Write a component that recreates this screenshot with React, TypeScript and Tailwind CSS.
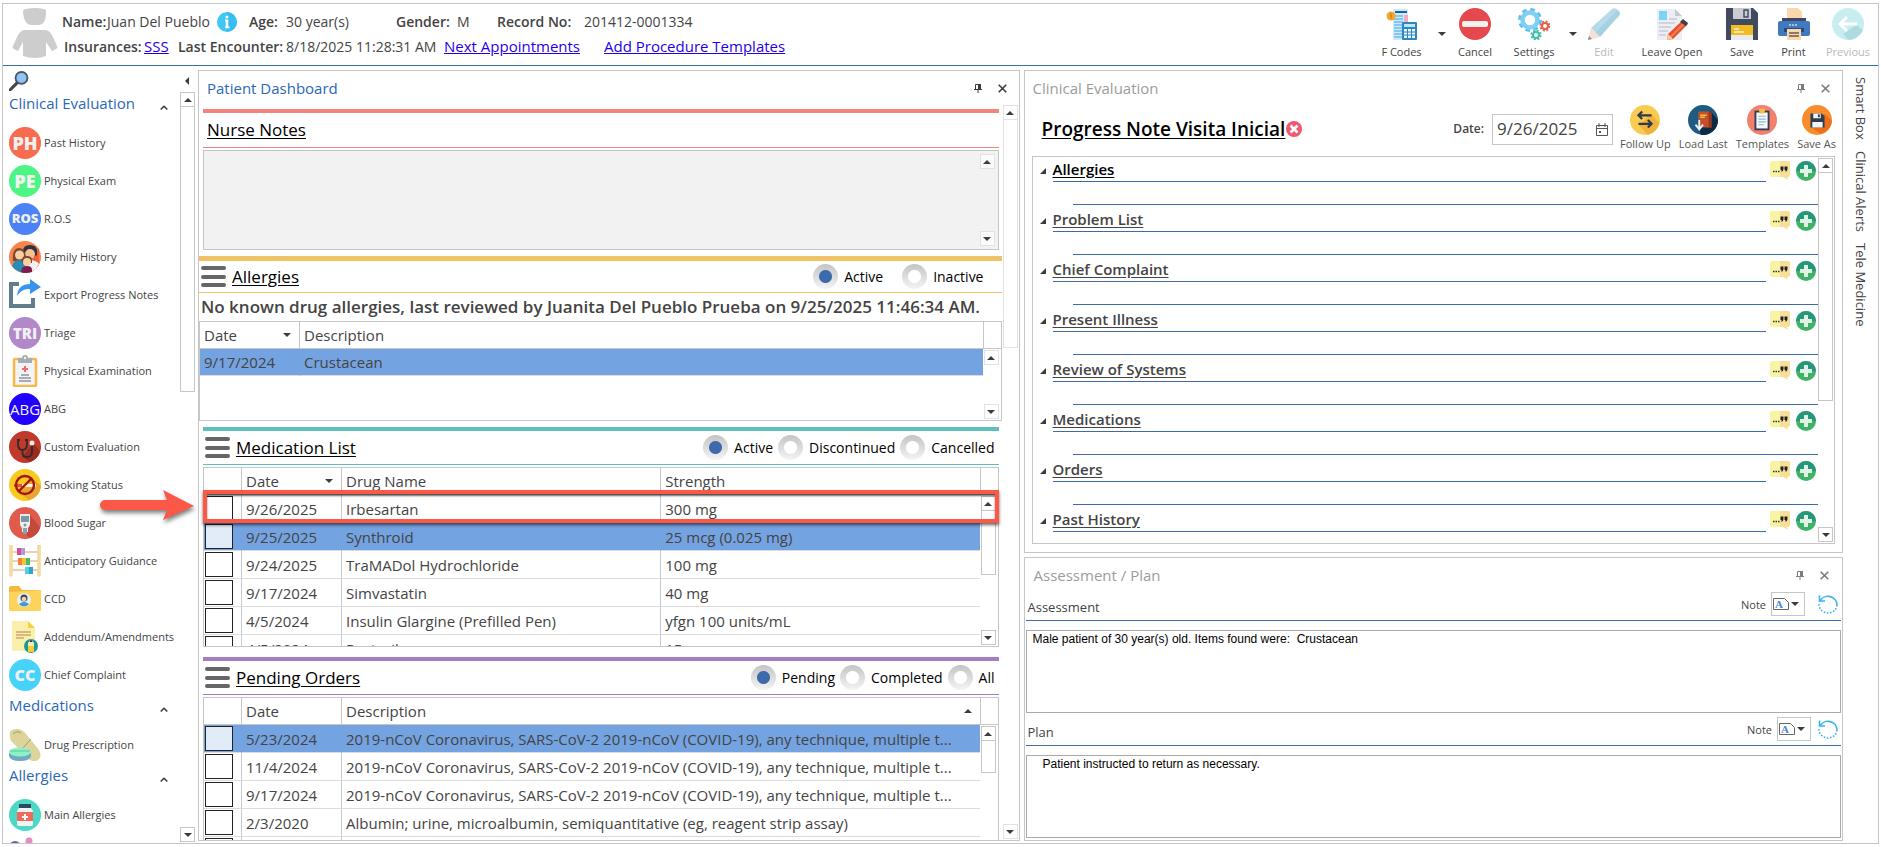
import { useState } from 'react'
import type { ReactNode } from 'react'
import clsx from 'clsx'

/* ---------- small shared pieces ---------- */

const Caret = ({ dir = 'down' }: { dir?: 'up' | 'down' }) => (
  <svg width="8" height="4" viewBox="0 0 8 4" className="shrink-0" aria-hidden="true">
    <path d={dir === 'up' ? 'M0 4 4 0l4 4z' : 'M0 0h8L4 4z'} fill="#3c3c3c" />
  </svg>
)

const Pin = () => (
  <svg width="8" height="9" viewBox="0 0 8 9" aria-hidden="true">
    <path d="M1.5.5h5v5h-5zM0 5.5h8M4 6v3" fill="none" stroke="currentColor" />
    <path d="M4 0h3v6H4z" fill="currentColor" />
  </svg>
)

const Cross = () => (
  <svg width="9" height="9" viewBox="0 0 9 9" aria-hidden="true">
    <path d="m.7.7 7.6 7.6M8.3.7.7 8.3" stroke="currentColor" strokeWidth="1.6" />
  </svg>
)

function ScrollBar({ thumb, light = false }: { thumb?: string; light?: boolean }) {
  const edge = light ? 'border-[#e2e2e2]' : 'border-[#c6c6c6]'
  return (
    <div className="flex flex-col justify-between w-[15px] h-full shrink-0">
      <div>
        <button type="button" aria-label="Scroll up" className={clsx('flex items-center justify-center size-[15px] border bg-white/70', edge)}>
          <Caret dir="up" />
        </button>
        {thumb && <div className={clsx('border border-t-0 bg-white', edge, thumb)} />}
      </div>
      <button type="button" aria-label="Scroll down" className={clsx('flex items-center justify-center size-[15px] border bg-white/70', edge)}>
        <Caret />
      </button>
    </div>
  )
}

function PanelTitle({ title, active = false }: { title: string; active?: boolean }) {
  return (
    <div className={clsx('flex items-center h-[34px] pl-2 pr-3 shrink-0', active ? 'text-[#2a68b8]' : 'text-[#9c9c9c]')}>
      <h1 className="flex-1 text-[15px]">{title}</h1>
      <div className={clsx('flex items-center gap-4', active ? 'text-[#3c3c3c]' : 'text-[#7c7c7c]')}>
        <button type="button" aria-label={`Pin ${title}`}><Pin /></button>
        <button type="button" aria-label={`Close ${title}`}><Cross /></button>
      </div>
    </div>
  )
}

/* ---------- icons ---------- */

const Svg = ({ size = 32, children }: { size?: number; children: ReactNode }) => (
  <svg width={size} height={size} viewBox="0 0 32 32" className="shrink-0" aria-hidden="true">{children}</svg>
)

const PersonIcon = () => (
  <svg width="46" height="50" viewBox="0 0 46 50" fill="#cdcdcd" aria-hidden="true">
    <path d="M11 4q0-3 3-3 9-2 18 0 2 0 2 3 0 13-8 13h-6Q12 17 11 4z" />
    <path d="M13 22h20q4 0 7 5l5 11q1 2-1 3l-4 2-6-9v14q-11 4-23 0V34l-5 9-4-2q-2-1-1-3l5-11q3-5 7-5z" />
  </svg>
)

const InfoIcon = () => (
  <Svg size={20}>
    <circle cx="16" cy="16" r="16" fill="#3fc8f4" />
    <path d="M16 0a16 16 0 0 1 0 32z" fill="#2fb4ea" opacity=".5" />
    <circle cx="16" cy="8" r="2.4" fill="#fff" />
    <path d="M13 12h5v11h2v3h-7v-3h1v-8h-1z" fill="#fff" />
  </Svg>
)

const FCodesIcon = () => (
  <Svg>
    <path d="M7 1h15v31H7z" fill="#cfeaf9" />
    <path d="M9 4h12" stroke="#1f5e96" strokeWidth="2" />
    <path d="M8 8h9M8 11h9M8 14h9M8 17h9M8 20h9M8 23h9M8 26h9M8 29h9" stroke="#6cbcf4" strokeWidth="1.6" />
    <path d="M18 7h4v11h-4z" fill="#f4a9c2" />
    <circle cx="5" cy="8" r="4.5" fill="#f7a72b" />
    <path d="M5 5.500v5" stroke="#c9822a" strokeWidth="1.600" />
    <rect x="16" y="14" width="15" height="18" rx="1" fill="#2f85bd" />
    <path d="M18 16h11v3H18z" fill="#bfe6f6" />
    <path d="M18 21h11v9H18z" fill="#e9f7fd" />
    <path d="M21.500 21v9M25.500 21v9M18 24h11M18 27h11" stroke="#2f85bd" />
  </Svg>
)

const CancelIcon = () => (
  <Svg>
    <circle cx="16" cy="16" r="16" fill="#e5484d" />
    <rect x="3" y="13" width="26" height="6" rx="2" fill="#f5f0f0" />
  </Svg>
)

const SettingsIcon = () => (
  <Svg>
    <g fill="none">
      <circle cx="12" cy="12" r="10.500" stroke="#5cc0f0" strokeWidth="3" strokeDasharray="4.500 3.740" />
      <circle cx="12" cy="12" r="7.500" stroke="#7ed0f7" strokeWidth="4.500" />
      <circle cx="27" cy="18" r="4.500" stroke="#e8604c" strokeWidth="2" strokeDasharray="2 1.530" />
      <circle cx="27" cy="18" r="3" stroke="#e8604c" strokeWidth="2" />
      <circle cx="18" cy="27" r="4.500" stroke="#3fc1a8" strokeWidth="2" strokeDasharray="2 1.530" />
      <circle cx="18" cy="27" r="3" stroke="#3fc1a8" strokeWidth="2" />
    </g>
  </Svg>
)

const EditIcon = () => (
  <Svg>
    <path d="M24 1q3-2 6 1t1 6L12 29 3 20z" fill="#b5dbe9" />
    <path d="m28 10 3-2q2-3-1-6L7 25l5 4z" fill="#9fcadd" opacity=".6" />
    <path d="m3 20 9 9-12 3z" fill="#f8dfd3" />
    <path d="m1 28 3 3-4 1z" fill="#8b8b98" />
  </Svg>
)

const LeaveOpenIcon = () => (
  <Svg>
    <path d="M1 1h18l7 7v24H1z" fill="#eceef3" />
    <path d="M19 1v7h7z" fill="#c6cad6" />
    <path d="M3 3h8v9H3z" fill="#7ed2f7" />
    <path d="M13 11h8M3 15h16M3 19h12M3 23h9M3 27h7" stroke="#c6cad6" strokeWidth="1.600" />
    <path d="m27 12 5 4-15 15-6 1 1-6z" fill="#e8502f" />
    <path d="m29.500 14-15 15" stroke="#f47d50" strokeWidth="2" />
    <path d="m27 11 5 4-2 3-6-4z" fill="#38404e" />
    <path d="m12 26 5 5-6 1z" fill="#f6cf9a" />
  </Svg>
)

const SaveIcon = () => (
  <Svg>
    <path d="M0 0h27l5 5v27H0z" fill="#414a5e" />
    <path d="M7 0h18v11H7z" fill="#c9ccd2" />
    <path d="M18 2h4v7h-4z" fill="none" stroke="#414a5e" strokeWidth="1.400" />
    <path d="M5 17h22v10H5z" fill="#f1bb22" />
    <path d="M8 21h5M8 24h10" stroke="#fdf3cf" strokeWidth="1.400" />
    <path d="M5 27h22v5H5z" fill="#e9ebee" />
  </Svg>
)

const PrintIcon = () => (
  <Svg>
    <path d="M9 0h11l4 4v9H9z" fill="#fbd7ad" />
    <path d="M4 10h24v5H4z" fill="#3c4a63" />
    <path d="M2 13h28q2 0 2 2v11q0 2-2 2H2q-2 0-2-2V15q0-2 2-2z" fill="#4079be" />
    <path d="M11 17h9" stroke="#bcd7f5" strokeWidth="1.400" strokeDasharray="2 1" />
    <path d="M6 20h20v4H6z" fill="#2c4a78" />
    <path d="M9 21h14v11H9z" fill="#fbd7ad" />
    <path d="M11 25h10M11 28h10" stroke="#6b5a4c" strokeWidth="1.300" />
  </Svg>
)

const PreviousIcon = () => (
  <Svg>
    <circle cx="16" cy="16" r="16" fill="#c8edf1" />
    <path d="m24 17 7 5a16 16 0 0 1-15 10l-5-6z" fill="#aedbe1" />
    <path d="M25 16H8M15 9l-7 7 7 7" fill="none" stroke="#fff" strokeWidth="3" />
  </Svg>
)

const SearchIcon = () => (
  <Svg size={20}>
    <path d="m2 30 11-11" stroke="#444" strokeWidth="5" strokeLinecap="round" />
    <circle cx="20" cy="11" r="9.500" fill="#8fc4f8" stroke="#4d5561" strokeWidth="3" />
  </Svg>
)

const FamilyIcon = () => (
  <Svg>
    <circle cx="16" cy="16" r="16" fill="#f9854a" />
    <path d="M16 32a16 16 0 0 0 14-9V8L18 4z" fill="#f0603e" />
    <path d="M14 10q0-6 7-6t7 6v4q-7 5-14 0z" fill="#2f3440" />
    <circle cx="21" cy="13" r="5" fill="#f4c191" />
    <path d="M4 20q-1-13 6-13t7 13z" fill="#7a4a2c" />
    <circle cx="10.500" cy="14" r="4.500" fill="#f7cfa2" />
    <path d="M3 25q2-6 7-6t6 6v7Q7 31 3 25z" fill="#2a8bb5" />
    <path d="M17 22q4-4 9-2 3 1 4 3-4 8-12 9z" fill="#f2f2f2" />
    <path d="M13 19q0-4 5-4t5 4v3H13z" fill="#7a4a2c" />
    <circle cx="18" cy="21" r="4" fill="#f7cfa2" />
    <path d="M12 31q0-6 6-6t5 6q-6 2-11 0z" fill="#7d1d4e" />
  </Svg>
)

const ExportIcon = () => (
  <Svg>
    <path d="M10 5H2v22h22v-8" fill="none" stroke="#607d8b" strokeWidth="4" />
    <path d="M8 17Q9 5 21 5V0l11 8-11 7v-5q-8-1-13 7z" fill="#3a94ee" />
  </Svg>
)

const ClipboardIcon = () => (
  <Svg>
    <rect x="5" y="4" width="22" height="27" rx="1" fill="#f1f3f4" stroke="#fbb649" strokeWidth="2.500" />
    <path d="M9 3h4a3 3 0 0 1 6 0h4v5H9z" fill="#a8adb2" />
    <circle cx="16" cy="3" r="1.200" fill="#f1f3f4" />
    <path d="M16 11v6M13 14h6" stroke="#f46a6a" strokeWidth="2" />
    <path d="M12 20h8M10 23h12M10 26h12" stroke="#5c666e" strokeWidth="1.200" />
  </Svg>
)

const StethoscopeIcon = () => (
  <Svg>
    <circle cx="16" cy="16" r="16" fill="#c0392b" />
    <path d="m13 26 11-14 7 8a16 16 0 0 1-10 11z" fill="#9a2a20" />
    <path d="M11 9H9v4q0 6 4.500 6T18 13V9h-2M13.500 19v3q0 4 4.500 4t5-4v-8" fill="none" stroke="#2c2c2c" strokeWidth="1.800" />
    <circle cx="23" cy="12" r="2.500" fill="#e8e8e8" />
  </Svg>
)

const SmokingIcon = () => (
  <Svg>
    <circle cx="16" cy="16" r="16" fill="#f9c91d" />
    <path d="m22 8 10 9a16 16 0 0 1-12 14l-11-8z" fill="#eaa62c" />
    <path d="M5 15h8v3H5z" fill="#e25241" />
    <path d="M13 15h14v3H13z" fill="#f4f1ea" />
    <circle cx="16" cy="16" r="9" fill="none" stroke="#a3160d" strokeWidth="2.400" />
    <path d="m10 22 12-12" stroke="#a3160d" strokeWidth="2.400" />
  </Svg>
)

const BloodSugarIcon = () => (
  <Svg>
    <circle cx="16" cy="16" r="16" fill="#e15b4c" />
    <path d="m21 8 10 12a16 16 0 0 1-10 11l-7-6z" fill="#c24a3d" />
    <path d="M11 7h10v10q0 2-2 4v4h-6v-4q-2-2-2-4z" fill="#eceff1" />
    <path d="M12 9h8v6h-8z" fill="#7f97a5" />
    <circle cx="16" cy="18" r="1.500" fill="#7f97a5" />
    <path d="M14 21h4v6h-4z" fill="#8aa0ad" />
  </Svg>
)

const AbacusIcon = () => (
  <Svg>
    <path d="M2 7h28M2 16h28M2 25h28" stroke="#e3c48e" strokeWidth="1.500" />
    <path d="M2 1v29M30 1v29" stroke="#f5d9a0" strokeWidth="3.600" strokeLinecap="round" />
    <path d="M8 3h4v7H8z" fill="#cf4f9a" />
    <path d="M12 3h4v7h-4z" fill="#b39ad6" />
    <path d="M9 13h4v7H9z" fill="#f5803e" />
    <path d="M13 13h4v7h-4z" fill="#f7c52d" />
    <path d="M17 13h4v7h-4z" fill="#46b978" />
    <path d="M16 22h4v7h-4z" fill="#52cdea" />
    <path d="M20 22h4v7h-4z" fill="#2aa6d0" />
  </Svg>
)

const FolderIcon = () => (
  <Svg>
    <path d="M0 5q0-2 2-2h8l3 4h17q2 0 2 2v17q0 2-2 2H2q-2 0-2-2z" fill="#f3b93c" />
    <path d="M0 9 32 7v19q0 2-2 2H2q-2 0-2-2z" fill="#fdd35b" />
    <circle cx="15" cy="17" r="7" fill="#e6eff5" />
    <circle cx="15" cy="15" r="3.500" fill="#3b4a5a" />
    <circle cx="15" cy="16" r="2.300" fill="#f7cfa2" />
    <path d="M10 21q5-4 10 0-5 5-10 0z" fill="#3f97d4" />
  </Svg>
)

const AddendumIcon = () => (
  <Svg>
    <path d="M3 0h16l7 7v23H3z" fill="#fcefae" />
    <path d="M19 0v7h7z" fill="#f5d33a" />
    <path d="M7 11h15M7 14h15M7 17h8" stroke="#c9a86b" strokeWidth="1.300" />
    <circle cx="22" cy="25" r="7" fill="#199b8d" />
    <path d="m22 18 3 4v9h-6v-9z" fill="#f6e9c0" />
    <path d="m22 18 1.500 3h-3z" fill="#333" />
    <path d="M19 25h6v6h-6z" fill="#f5cd3a" />
  </Svg>
)

const PillsIcon = () => (
  <Svg>
    <path d="M1 8Q-1 0 8 0q5 0 9 5l13 16q4 8-3 11-6 1-9-4L3 13Q1 11 1 8z" fill="#ddd49c" />
    <path d="m14 19 8-9M4 5q4-4 8-1" stroke="#a49b66" fill="none" />
    <path d="M0 24h22v3q-1 5-11 5T0 27z" fill="#6fa9c6" />
    <ellipse cx="11" cy="23" rx="11" ry="4.500" fill="#8ef0c4" />
    <path d="M1 22h20" stroke="#5cc99b" />
  </Svg>
)

const BottleIcon = () => (
  <Svg>
    <circle cx="16" cy="16" r="16" fill="#4bd9c5" />
    <path d="M10 5h12v4H10z" fill="#2c4a5e" />
    <path d="M10 9h12l2 3v13q0 2-2 2H10q-2 0-2-2V12z" fill="#eef4f4" />
    <path d="M8 13h16v9H8z" fill="#f0695a" />
    <path d="M16 15v6M13 18h6" stroke="#fff" strokeWidth="2" />
  </Svg>
)

const MorePillsIcon = () => (
  <Svg>
    <circle cx="6" cy="10" r="6" fill="#6a5fb4" />
    <circle cx="20" cy="4" r="3.500" fill="#e58cc0" />
    <path d="M15 12q5-5 10 0v8H15z" fill="#7b7fd0" />
  </Svg>
)

const FollowUpIcon = () => (
  <Svg size={30}>
    <circle cx="16" cy="16" r="16" fill="#f9cb51" />
    <path d="m22 9 9 10a16 16 0 0 1-12 13l-9-10z" fill="#eeb33d" />
    <path d="M23 11H9M13 7l-4 4 4 4M9 20h14M19 16l4 4-4 4" fill="none" stroke="#2f3a4a" strokeWidth="2.400" />
  </Svg>
)

const LoadLastIcon = () => (
  <Svg size={30}>
    <circle cx="16" cy="16" r="16" fill="#1d5b80" />
    <path d="m25 8 7 8a16 16 0 0 1-18 16l-3-8z" fill="#0c2c45" />
    <path d="M11 7h11l3 2v15H11z" fill="#c2502c" />
    <path d="M22 7h3v17h-3z" fill="#97381d" />
    <path d="M13 11h7M13 13h5" stroke="#f5b942" strokeWidth="1.600" />
    <path d="M12 16v9M8 21l4 5 4-5" fill="none" stroke="#e8f4fb" strokeWidth="2" />
  </Svg>
)

const TemplatesIcon = () => (
  <Svg size={30}>
    <circle cx="16" cy="16" r="16" fill="#f37f6d" />
    <path d="M8 6h16v21H8z" fill="#324055" />
    <path d="M10 8h12v17H10z" fill="#f4f8fa" />
    <path d="M13 4h6v5h-6z" fill="#f5bd41" />
    <path d="M12 12h8M12 15h8M12 18h8M12 21h6" stroke="#8fb9d6" strokeWidth="1.200" />
  </Svg>
)

const SaveAsIcon = () => (
  <Svg size={30}>
    <circle cx="16" cy="16" r="16" fill="#f78d2c" />
    <path d="m24 9 8 8a16 16 0 0 1-12 14l-11-8z" fill="#ec6f1c" />
    <path d="M9 9h12l3 3v12H9z" fill="#2f3d50" />
    <path d="M12 9h8v5h-8zM11 18h11v6H11z" fill="#f2f4f5" />
    <path d="M17 10h2v3h-2z" fill="#2f3d50" />
  </Svg>
)

const QuoteIcon = () => (
  <svg width="20" height="19" viewBox="0 0 20 19" aria-hidden="true">
    <path d="M0 2q0-2 2-2h8v16H2q-2 0-2-2z" fill="#f8f4a4" />
    <path d="M10 0h8q2 0 2 2v12q0 2-2 2h-1l1 3-5-3h-3z" fill="#f8df99" />
    <path d="M3 10.500h1.500M5.500 10.500H7M8 10.500h1.500" stroke="#333" strokeWidth="1.400" />
    <path d="M10.500 5.500h3V8q0 2-2 3v-2h-1zM14.500 5.500h3V8q0 2-2 3v-2h-1z" fill="#222" />
  </svg>
)

const PlusIcon = () => (
  <svg width="20" height="20" viewBox="0 0 20 20" aria-hidden="true">
    <circle cx="10" cy="10" r="10" fill="#3fb265" />
    <path d="M0 10a10 10 0 0 1 20 0z" fill="#27977c" />
    <path d="M8 4h4v4h4v4h-4v4H8v-4H4V8h4z" fill="#dff3e4" />
  </svg>
)

const RefreshIcon = () => (
  <svg width="20" height="20" viewBox="0 0 20 20" fill="none" aria-hidden="true">
    <path d="M2 7a9 8.500 0 0 1 17 4" stroke="#35b4f0" strokeWidth="1.600" />
    <path d="M1.500 1.500v5.500H7" stroke="#35b4f0" strokeWidth="1.600" />
    <path d="M19 11a9 8.500 0 0 1-18-1" stroke="#35b4f0" strokeWidth="1.600" strokeDasharray="1.600 1.600" />
  </svg>
)

const Badge = ({ text, className }: { text: string; className: string }) => (
  <span className={clsx('flex items-center justify-center size-8 rounded-full shrink-0 overflow-hidden text-[#f0f0f0]', className)}>
    {text}
  </span>
)

/* ---------- header ---------- */

const tools = [
  { label: 'F Codes', icon: <FCodesIcon />, width: 'w-[65px]', menu: 'w-[15px]' },
  { label: 'Cancel', icon: <CancelIcon />, width: 'w-[52px]' },
  { label: 'Settings', icon: <SettingsIcon />, width: 'w-[66px]', menu: 'w-[12px]' },
  { label: 'Edit', icon: <EditIcon />, width: 'w-[50px]', disabled: true },
  { label: 'Leave Open', icon: <LeaveOpenIcon />, width: 'w-[86px]' },
  { label: 'Save', icon: <SaveIcon />, width: 'w-[54px]' },
  { label: 'Print', icon: <PrintIcon />, width: 'w-[49px]' },
  { label: 'Previous', icon: <PreviousIcon />, width: 'w-[60px]', disabled: true },
]

function Header() {
  return (
    <header className="flex shrink-0 h-[62px] border-b border-[#3a6ea8]">
      <div className="pl-[9px] pt-1 w-[59px] shrink-0"><PersonIcon /></div>
      <div className="flex-1 pt-[5px] text-sm whitespace-nowrap">
        <div className="flex items-center h-[25px]">
          <b className="font-semibold w-[45px]">Name:</b>
          <span className="w-[110px]">Juan Del Pueblo</span>
          <button type="button" aria-label="Patient information" className="w-8"><InfoIcon /></button>
          <b className="font-semibold w-[37px]">Age:</b>
          <span className="w-[110px]">30 year(s)</span>
          <b className="font-semibold w-[61px]">Gender:</b>
          <span className="w-[40px]">M</span>
          <b className="font-semibold w-[87px]">Record No:</b>
          <span>201412-0001334</span>
        </div>
        <div className="flex items-center h-[25px] pl-[2px]">
          <b className="font-semibold w-[80px]">Insurances:</b>
          <a href="#insurance" className="text-[15px] text-[#1f00f0] underline w-[34px]">SSS</a>
          <b className="font-semibold w-[108px]">Last Encounter:</b>
          <span className="w-[158px]">8/18/2025 11:28:31 AM</span>
          <a href="#appointments" className="text-[15px] text-[#1f00f0] underline w-[160px]">Next Appointments</a>
          <a href="#procedures" className="text-[15px] text-[#1f00f0] underline">Add Procedure Templates</a>
        </div>
      </div>
      <nav className="flex pt-1 text-[11px]">
        {tools.map((tool) => (
          <div key={tool.label} className="flex">
            <button type="button" disabled={tool.disabled} className={clsx('flex flex-col items-center disabled:text-[#b9b9b9]', tool.width)}>
              {tool.icon}
              <span className="leading-6 whitespace-nowrap">{tool.label}</span>
            </button>
            {tool.menu && (
              <button type="button" aria-label={`${tool.label} menu`} className={clsx('flex justify-center pt-6', tool.menu)}><Caret /></button>
            )}
          </div>
        ))}
      </nav>
    </header>
  )
}

/* ---------- sidebar ---------- */

const menu = [
  {
    title: 'Clinical Evaluation',
    items: [
      { label: 'Past History', icon: <Badge text="PH" className="bg-[#f76b4f] text-lg font-black" /> },
      { label: 'Physical Exam', icon: <Badge text="PE" className="bg-[#4cf584] text-lg font-black" /> },
      { label: 'R.O.S', icon: <Badge text="ROS" className="bg-[#4b82f5] text-[13px] font-black" /> },
      { label: 'Family History', icon: <FamilyIcon /> },
      { label: 'Export Progress Notes', icon: <ExportIcon /> },
      { label: 'Triage', icon: <Badge text="TRI" className="bg-[#b388c9] text-[15px] font-black" /> },
      { label: 'Physical Examination', icon: <ClipboardIcon /> },
      { label: 'ABG', icon: <Badge text="ABG" className="bg-[#2200ff] text-[15px]" /> },
      { label: 'Custom Evaluation', icon: <StethoscopeIcon /> },
      { label: 'Smoking Status', icon: <SmokingIcon /> },
      { label: 'Blood Sugar', icon: <BloodSugarIcon /> },
      { label: 'Anticipatory Guidance', icon: <AbacusIcon /> },
      { label: 'CCD', icon: <FolderIcon /> },
      { label: 'Addendum/Amendments', icon: <AddendumIcon /> },
      { label: 'Chief Complaint', icon: <Badge text="CC" className="bg-[#46d3fa] text-base font-black" /> },
    ],
  },
  { title: 'Medications', items: [{ label: 'Drug Prescription', icon: <PillsIcon /> }] },
  { title: 'Allergies', items: [{ label: 'Main Allergies', icon: <BottleIcon /> }, { label: '', icon: <MorePillsIcon /> }] },
]

function Sidebar() {
  return (
    <aside className="flex flex-col w-[195px] shrink-0 min-h-0">
      <div className="flex justify-between h-[25px] pt-1 pl-[6px] pr-[9px] shrink-0">
        <button type="button" aria-label="Search"><SearchIcon /></button>
        <button type="button" aria-label="Collapse menu">
          <svg width="4" height="8" viewBox="0 0 4 8"><path d="M4 0v8L0 4z" fill="#3c3c3c" /></svg>
        </button>
      </div>
      <div className="flex flex-1 min-h-0">
        <nav className="flex-1 min-w-0 overflow-hidden pl-[6px]">
          {menu.map((group, i) => (
            <section key={group.title}>
              <h2 className={clsx('flex items-center justify-between pr-3 text-[15px] text-[#2a68b8]', i === 0 ? 'h-[33px] pb-2' : 'h-8 pb-[10px]')}>
                {group.title}
                <button type="button" aria-label={`Toggle ${group.title}`} className="pt-2">
                  <svg width="8" height="5" viewBox="0 0 8 5"><path d="m.7 4.500 3.300-3.300 3.300 3.300" fill="none" stroke="#3c3c3c" strokeWidth="1.500" /></svg>
                </button>
              </h2>
              {group.items.map((item) => (
                <button key={item.label} type="button" aria-label={item.label || 'More allergies'} className="flex items-center gap-[3px] h-[38px] text-[11px] whitespace-nowrap">
                  {item.icon}
                  {item.label}
                </button>
              ))}
            </section>
          ))}
        </nav>
        <div className="pt-px pb-px pr-[3px]"><ScrollBar thumb="h-[285px]" /></div>
      </div>
    </aside>
  )
}

/* ---------- patient dashboard ---------- */

function RadioSet({ name, options, spacing }: { name: string; options: string[]; spacing: string }) {
  const [value, setValue] = useState(options[0])
  return (
    <div className={clsx('flex items-center text-sm text-black', spacing)}>
      {options.map((option) => (
        <label key={option} className="flex items-center gap-[6px]">
          <input
            type="radio"
            name={name}
            checked={value === option}
            onChange={() => setValue(option)}
            className="appearance-none size-[25px] rounded-full bg-[radial-gradient(circle,white_6px,transparent_7px),linear-gradient(#c4c4c4,#f4f4f4)] checked:bg-[radial-gradient(circle,#3d6aab_6px,transparent_7px),linear-gradient(#c4c4c4,#f4f4f4)]"
          />
          <span className="pt-px">{option}</span>
        </label>
      ))}
    </div>
  )
}

function SectionHead({ title, children }: { title: string; children: ReactNode }) {
  return (
    <>
      <button type="button" aria-label={`${title} menu`} className="flex flex-col justify-between w-[25px] h-[21px]">
        <span className="w-full h-1 rounded-sm bg-[#666]" />
        <span className="w-full h-1 rounded-sm bg-[#666]" />
        <span className="w-full h-1 rounded-sm bg-[#666]" />
      </button>
      <h2 className="flex-1 pt-px text-[17px] text-black underline underline-offset-2">{title}</h2>
      {children}
    </>
  )
}

type Column = { label: string; width?: string; sort?: 'up' | 'down' }

type GridProps = {
  columns: Column[]
  rows: string[][]
  selected: number
  checks?: boolean
  thumb?: string
  className: string
}

function DataGrid({ columns, rows, selected, checks = false, thumb, className }: GridProps) {
  return (
    <div className={clsx('flex overflow-hidden border border-[#c6c6c6]', className)}>
      <div className="flex-1 min-w-0 overflow-hidden">
        <table className="w-full table-fixed border-separate border-spacing-0 text-[15px] leading-6">
          <thead>
            <tr className="h-[27px] text-left">
              {checks && <th aria-label="Select" className="w-[37px] p-0 border-b border-[#c6c6c6]" />}
              {columns.map((col, i) => (
                <th key={col.label} className={clsx('p-0 pl-1 font-normal border-b border-[#c6c6c6]', (checks || i > 0) && 'border-l', col.width)}>
                  <div className="flex items-center justify-between pr-2">
                    {col.label}
                    {col.sort && <Caret dir={col.sort} />}
                  </div>
                </th>
              ))}
            </tr>
          </thead>
          <tbody>
            {rows.map((row, r) => (
              <tr key={row.join()} className={clsx(checks ? 'h-7' : 'h-[27px]', r === selected && 'bg-[#74a3e1]')}>
                {checks && (
                  <td className="p-0 pl-px border-b border-[#dcdcdc]">
                    <input
                      type="checkbox"
                      aria-label={`${row[0]} ${row[1]}`}
                      className={clsx('block appearance-none w-7 h-[25px] border border-[#222] checked:bg-[#444]', r === selected ? 'bg-[#e2ecf9]' : 'bg-white')}
                    />
                  </td>
                )}
                {row.map((cell, c) => (
                  <td
                    key={c}
                    className={clsx(
                      'p-0 pl-1 truncate border-b border-b-[#dcdcdc]',
                      (checks || c > 0) && 'border-l',
                      r === selected ? 'border-l-[#74a3e1]' : 'border-l-[#c3cad3]',
                    )}
                  >
                    {cell}
                  </td>
                ))}
              </tr>
            ))}
          </tbody>
        </table>
      </div>
      <div className="flex flex-col w-[18px] shrink-0">
        <div className="h-[27px] shrink-0 border-l border-b border-[#c6c6c6]" />
        <div className="flex-1 min-h-0 pl-px pt-px pb-px"><ScrollBar thumb={thumb} light={!thumb} /></div>
      </div>
    </div>
  )
}

const medications = [
  ['9/26/2025', 'Irbesartan', '300 mg'],
  ['9/25/2025', 'Synthroid', '25 mcg (0.025 mg)'],
  ['9/24/2025', 'TraMADol Hydrochloride', '100 mg'],
  ['9/17/2024', 'Simvastatin', '40 mg'],
  ['4/5/2024', 'Insulin Glargine (Prefilled Pen)', 'yfgn 100 units/mL'],
  ['4/5/2024', 'Restoril', '15 mg'],
]

const covidTest = '2019-nCoV Coronavirus, SARS-CoV-2 2019-nCoV (COVID-19), any technique, multiple t...'

const orders = [
  ['5/23/2024', covidTest],
  ['11/4/2024', covidTest],
  ['9/17/2024', covidTest],
  ['2/3/2020', 'Albumin; urine, microalbumin, semiquantitative (eg, reagent strip assay)'],
  ['', ''],
]

function Dashboard() {
  return (
    <section className="flex flex-col flex-1 min-w-0 border border-[#c6c6c6]">
      <PanelTitle title="Patient Dashboard" active />
      <div className="flex flex-1 min-h-0">
        <div className="flex flex-col flex-1 min-w-0 overflow-hidden pt-1">
          <div className="shrink-0 ml-1 mr-[3px]">
            <div className="flex items-center h-[39px] pl-1 border-t-4 border-b border-[#f4827e]">
              <h2 className="text-[17px] text-black underline underline-offset-2">Nurse Notes</h2>
            </div>
            <div className="flex mt-[2px] h-[100px] border border-[#c6c6c6] bg-[#f2f2f2]">
              <textarea aria-label="Nurse Notes" className="flex-1 resize-none outline-none" />
              <div className="py-[3px] pr-[3px]"><ScrollBar light /></div>
            </div>
          </div>

          <div className="shrink-0 mt-[6px]">
            <div className="flex items-center gap-[6px] h-[37px] pl-[2px] pr-[18px] border-t-[5px] border-b border-[#f0c466]">
              <SectionHead title="Allergies">
                <RadioSet name="allergies" options={['Active', 'Inactive']} spacing="gap-[19px]" />
              </SectionHead>
            </div>
            <p className="h-7 pl-[2px] text-[17px] leading-7 font-semibold whitespace-nowrap">
              No known drug allergies, last reviewed by Juanita Del Pueblo Prueba on 9/25/2025 11:46:34 AM.
            </p>
            <DataGrid
              className="h-[100px]"
              columns={[{ label: 'Date', width: 'w-[99px]', sort: 'down' }, { label: 'Description' }]}
              rows={[['9/17/2024', 'Crustacean']]}
              selected={0}
            />
          </div>

          <div className="relative shrink-0 mt-[6px] ml-1 mr-[3px]">
            <div className="flex items-center gap-[6px] h-[38px] pl-[2px] pr-1 border-t-4 border-b border-[#5fbfbf]">
              <SectionHead title="Medication List">
                <RadioSet name="medications" options={['Active', 'Discontinued', 'Cancelled']} spacing="gap-[5px]" />
              </SectionHead>
            </div>
            <DataGrid
              checks
              className="mt-[2px] h-[180px]"
              columns={[{ label: 'Date', width: 'w-[100px]', sort: 'down' }, { label: 'Drug Name' }, { label: 'Strength' }]}
              rows={medications}
              selected={1}
              thumb="h-[64px]"
            />
            {/* highlight over the newly added drug */}
            <div className="absolute inset-x-0 top-[63px] h-[33px] border-4 border-[#fb5848] shadow-[0_2px_3px_rgba(0,0,0,0.6),inset_0_2px_2px_rgba(0,0,0,0.6)]" />
          </div>

          <div className="flex flex-col shrink-0 mt-[10px] ml-1 mr-[3px] h-[220px]">
            <div className="flex items-center gap-[6px] h-[38px] shrink-0 pl-[2px] pr-1 border-t-4 border-b border-[#a67cc4]">
              <SectionHead title="Pending Orders">
                <RadioSet name="orders" options={['Pending', 'Completed', 'All']} spacing="gap-[5px]" />
              </SectionHead>
            </div>
            <DataGrid
              checks
              className="mt-[2px] flex-1"
              columns={[{ label: 'Date', width: 'w-[100px]' }, { label: 'Description', sort: 'up' }]}
              rows={orders}
              selected={0}
              thumb="h-8"
            />
          </div>
        </div>
        <div className="pl-px pr-px pb-px"><ScrollBar thumb="h-[228px]" light /></div>
      </div>
    </section>
  )
}

/* ---------- clinical evaluation ---------- */

const noteSections = ['Allergies', 'Problem List', 'Chief Complaint', 'Present Illness', 'Review of Systems', 'Medications', 'Orders', 'Past History']

const noteActions = [
  { label: 'Follow Up', icon: <FollowUpIcon /> },
  { label: 'Load Last', icon: <LoadLastIcon /> },
  { label: 'Templates', icon: <TemplatesIcon /> },
  { label: 'Save As', icon: <SaveAsIcon /> },
]

function ClinicalEvaluation() {
  return (
    <section className="flex flex-col flex-1 min-h-0 border border-[#c6c6c6]">
      <PanelTitle title="Clinical Evaluation" />
      <div className="flex items-center h-12 shrink-0 pl-[17px] pr-[6px]">
        <h2 className="text-[19px] font-semibold text-black underline underline-offset-2 whitespace-nowrap">Progress Note Visita Inicial</h2>
        <button type="button" aria-label="Remove note" className="ml-px">
          <Svg size={16}>
            <circle cx="16" cy="16" r="16" fill="#f0566e" />
            <path d="m9 9 14 14M23 9 9 23" stroke="#fff" strokeWidth="5.500" />
          </Svg>
        </button>
        <label htmlFor="note-date" className="ml-auto mr-2 text-xs font-semibold">Date:</label>
        <div className="flex items-center w-[121px] h-[31px] mr-[7px] px-1 border border-[#c6c6c6]">
          <input id="note-date" defaultValue="9/26/2025" className="flex-1 min-w-0 text-[17px] outline-none" />
          <button type="button" aria-label="Open calendar">
            <svg width="12" height="13" viewBox="0 0 12 13" fill="none" stroke="#555" aria-hidden="true">
              <path d="M.5 2.500h11v10H.5zM.5 5.500h11M3 0v4M9 0v4" />
              <path d="M3 8h2v2H3z" fill="#555" stroke="none" />
            </svg>
          </button>
        </div>
        <div className="flex gap-2 self-start text-[11px] text-[#555]">
          {noteActions.map((action) => (
            <button key={action.label} type="button" className="flex flex-col items-center">
              {action.icon}
              <span className="leading-[18px] whitespace-nowrap">{action.label}</span>
            </button>
          ))}
        </div>
      </div>

      <div className="flex flex-1 min-h-0 mt-[3px] mx-[7px] mb-2 border border-[#c6c6c6]">
        <ul className="flex-1 min-w-0 overflow-hidden">
          {noteSections.map((name, i) => (
            <li key={name}>
              <div className="flex items-start pl-[7px] pr-[2px]">
                <svg width="6" height="6" viewBox="0 0 6 6" className="mt-[11px] mr-[7px]" aria-hidden="true"><path d="M6 0v6H0z" fill="#3c3c3c" /></svg>
                <h3 className={clsx('flex-1 h-[25px] border-b border-[#3d6aab] text-[15px] leading-6 font-semibold underline underline-offset-2', i === 0 && 'text-black')}>{name}</h3>
                <button type="button" aria-label={`Add comment to ${name}`} className="ml-1 mt-1"><QuoteIcon /></button>
                <button type="button" aria-label={`Add to ${name}`} className="ml-[6px] mt-1"><PlusIcon /></button>
              </div>
              <div className="ml-10 h-[23px] mb-[2px] border-b border-[#3d6aab]" />
            </li>
          ))}
        </ul>
        <div className="py-px pr-px"><ScrollBar thumb="h-[228px]" /></div>
      </div>
    </section>
  )
}

/* ---------- assessment / plan ---------- */

type NoteBoxProps = { id: string; label: string; text: string; inset: string; gap: string }

function NoteBox({ id, label, text, inset, gap }: NoteBoxProps) {
  return (
    <div>
      <div className="flex items-start h-[29px] pl-[2px] pr-[3px] border-b border-[#3d6aab]">
        <label htmlFor={id} className="flex-1 pt-[6px] text-[13px]">{label}</label>
        <span className="mr-[5px] pt-px text-[11px] leading-6">Note</span>
        <button type="button" aria-label={`${label} note template`} className={clsx('flex items-center justify-between w-[34px] h-6 pl-px pr-[5px] border border-[#c6c6c6]', gap)}>
          <svg width="16" height="12" viewBox="0 0 16 12" aria-hidden="true">
            <path d="M.5.500h11l4 4v7H.5z" fill="#fff" stroke="#666" />
            <text x="2" y="10" fontSize="11" fontWeight="700" fontFamily="Liberation Serif, serif" fill="#4a86d0">A</text>
          </svg>
          <Caret />
        </button>
        <button type="button" aria-label={`Refresh ${label}`} className="pt-[2px]"><RefreshIcon /></button>
      </div>
      <textarea
        id={id}
        defaultValue={text}
        className={clsx('block w-full h-[83px] mt-[9px] resize-none border border-[#a9a9a9] outline-none font-["Liberation_Sans",Arial,sans-serif] text-xs text-black', inset)}
      />
    </div>
  )
}

function AssessmentPlan() {
  return (
    <section className="shrink-0 h-[284px] px-px border border-[#c6c6c6]">
      <PanelTitle title="Assessment / Plan" />
      <NoteBox id="assessment" label="Assessment" text="Male patient of 30 year(s) old. Items found were:  Crustacean" inset="pl-[6px]" gap="mr-[13px]" />
      <div className="mt-1">
        <NoteBox id="plan" label="Plan" text="Patient instructed to return as necessary." inset="pl-4" gap="mr-[7px]" />
      </div>
    </section>
  )
}

export default function App() {
  return (
    <div className='relative h-screen overflow-hidden pt-[3px] px-[2px] pb-[3px] bg-white text-[#444] font-["Open_Sans","Noto_Sans",sans-serif]'>
      <div className="flex flex-col h-full border border-[#c6c6c6]">
        <Header />
        <div className="flex flex-1 min-h-0">
          <Sidebar />
          <main className="flex flex-1 min-w-0 gap-1 pt-1 pb-[2px]">
            <Dashboard />
            <div className="flex flex-col flex-1 min-w-0 gap-1">
              <ClinicalEvaluation />
              <AssessmentPlan />
            </div>
          </main>
          <nav className="flex flex-col items-center gap-[11px] w-[35px] shrink-0 pt-[11px] text-[13px]">
            {['Smart Box', 'Clinical Alerts', 'Tele Medicine'].map((tab) => (
              <button key={tab} type="button" className="[writing-mode:vertical-rl]">{tab}</button>
            ))}
          </nav>
        </div>
      </div>

      {/* callout arrow pointing at the highlighted row */}
      <svg width="98" height="36" viewBox="0 0 98 36" className="absolute left-[99px] top-[489px] pointer-events-none drop-shadow-[1px_3px_2px_rgba(0,0,0,0.5)]" aria-hidden="true">
        <path d="M6 11h62L64 1l31 16-31 14 4-10H6a5 5 0 0 1 0-10z" fill="#fb5848" />
      </svg>
    </div>
  )
}
